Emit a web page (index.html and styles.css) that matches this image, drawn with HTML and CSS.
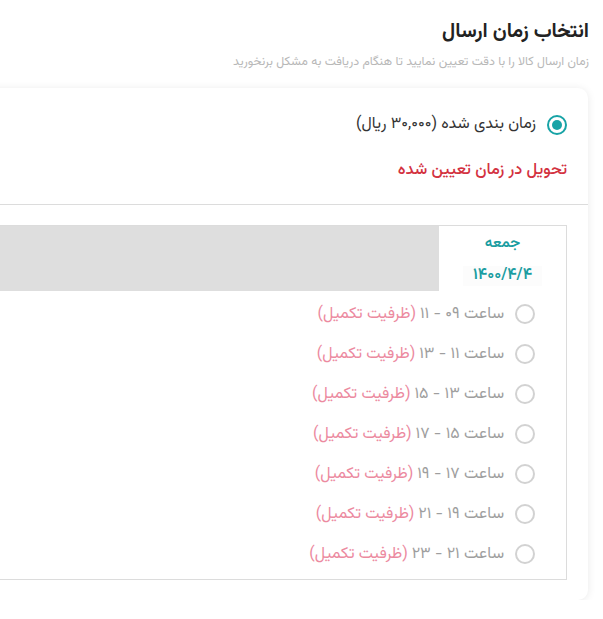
FILE: index.html
```html
<!DOCTYPE html>
<html lang="fa" dir="rtl">
<head>
    <meta charset="UTF-8">
    <title>انتخاب زمان ارسال</title>
    <meta name="viewport" content="width=device-width, initial-scale=1.0">
    <link rel="stylesheet" href="styles.css">
</head>
<body>
    <div class="page">
        <h2 class="title">انتخاب زمان ارسال</h2>
        <p class="subtitle">زمان ارسال کالا را با دقت تعیین نمایید تا هنگام دریافت به مشکل برنخورید</p>

        <div class="card">
            <div class="card-head">
                <label class="option">
                    <span class="radio checked"></span>
                    <span>زمان بندی شده (۳۰,۰۰۰ ریال)</span>
                </label>
                <div class="notice">تحویل در زمان تعیین شده</div>
            </div>

            <div class="card-body">
                <div class="schedule">
                    <div class="days">
                        <div class="day active">
                            <span class="day-name">جمعه</span>
                            <span class="day-date">۱۴۰۰/۴/۴</span>
                        </div>
                        <div class="days-fill"></div>
                    </div>
                    <ul class="slots">
                        <li class="slot"><span class="radio"></span><span class="slot-time">ساعت ۰۹ - ۱۱</span> <span class="full">(ظرفیت تکمیل)</span></li>
                        <li class="slot"><span class="radio"></span><span class="slot-time">ساعت ۱۱ - ۱۳</span> <span class="full">(ظرفیت تکمیل)</span></li>
                        <li class="slot"><span class="radio"></span><span class="slot-time">ساعت ۱۳ - ۱۵</span> <span class="full">(ظرفیت تکمیل)</span></li>
                        <li class="slot"><span class="radio"></span><span class="slot-time">ساعت ۱۵ - ۱۷</span> <span class="full">(ظرفیت تکمیل)</span></li>
                        <li class="slot"><span class="radio"></span><span class="slot-time">ساعت ۱۷ - ۱۹</span> <span class="full">(ظرفیت تکمیل)</span></li>
                        <li class="slot"><span class="radio"></span><span class="slot-time">ساعت ۱۹ - ۲۱</span> <span class="full">(ظرفیت تکمیل)</span></li>
                        <li class="slot"><span class="radio"></span><span class="slot-time">ساعت ۲۱ - ۲۳</span> <span class="full">(ظرفیت تکمیل)</span></li>
                    </ul>
                </div>
            </div>
        </div>
    </div>
</body>
</html>
```

FILE: styles.css
```css
body { margin: 0; background: #fff; color: #222; font-family: "Vazirmatn", "Noto Sans Arabic", "DejaVu Sans", sans-serif; overflow: hidden; }
.page { padding: 18px 14px 0 0; }
.title { margin: 0; font-size: 20px; line-height: 28px; font-weight: 700; color: #222; }
.subtitle { margin: 5px 0 0; font-size: 12.4px; line-height: 22px; color: #b8b8b8; }

.card {
    margin: 15px 1px 0 -30px;
    background: #fff;
    border-radius: 10px;
    box-shadow: 0 1px 8px rgba(0, 0, 0, .09);
}
.card-head { padding: 26px 21px 23px 0; border-bottom: 1px solid #dcdcdc; }
.option { display: flex; align-items: center; gap: 11px; font-size: 16px; line-height: 22px; color: #333; }
.notice { margin-top: 23px; font-size: 16.4px; line-height: 22px; font-weight: 500; color: #d3323f; }

.radio {
    width: 20px;
    height: 20px;
    box-sizing: border-box;
    border: 2px solid #d2d2d2;
    border-radius: 50%;
    flex-shrink: 0;
}
.radio.checked { border-color: #17a3a6; position: relative; }
.radio.checked::after {
    content: "";
    position: absolute;
    inset: 3px;
    border-radius: 50%;
    background: #17a3a6;
}

.card-body { padding: 20px 21px 20px 0; }
.schedule { border: 1px solid #dcdcdc; }
.days { display: flex; height: 65px; }
.day { width: 127px; display: flex; flex-direction: column; align-items: center; color: #1a9da1; }
.day-name { margin-top: 8px; font-size: 15px; line-height: 20px; font-weight: 600; }
.day-date { margin-top: 12px; font-size: 16px; line-height: 20px; font-weight: 600; padding: 0 10px; background: #fcfcfc; }
.days-fill { flex: 1; background: #dedede; }

.slots { list-style: none; margin: 0; padding: 3px 31px 5px 0; }
.slot { display: flex; align-items: center; height: 40px; font-size: 16px; color: #9e9e9e; }
.slot .radio { margin-left: 11px; }
.full { color: #ec8aa0; margin-right: 4px; }
```
